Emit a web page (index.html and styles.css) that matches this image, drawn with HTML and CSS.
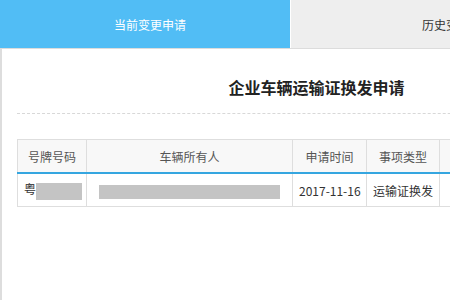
FILE: index.html
```html
<!DOCTYPE html>
<html lang="zh-CN">
<head>
    <meta charset="UTF-8">
    <title>变更申请</title>
    <link rel="stylesheet" href="styles.css">
</head>
<body>
<div class="page">
    <nav class="tabs">
        <a class="tab active" href="#">当前变更申请</a>
        <a class="tab" href="#">历史变更申请</a>
    </nav>

    <section class="panel">
        <h1 class="title">企业车辆运输证换发申请</h1>

        <table class="apply-table">
            <thead>
                <tr>
                    <th class="col-plate">号牌号码</th>
                    <th class="col-owner">车辆所有人</th>
                    <th class="col-date">申请时间</th>
                    <th class="col-type">事项类型</th>
                    <th class="col-state">审核状态</th>
                </tr>
            </thead>
            <tbody>
                <tr>
                    <td class="plate">粤<span class="mask mask-plate"></span></td>
                    <td><span class="mask mask-owner"></span></td>
                    <td class="center">2017-11-16</td>
                    <td class="center">运输证换发</td>
                    <td class="center">新申请</td>
                </tr>
            </tbody>
        </table>
    </section>
</div>
</body>
</html>
```

FILE: styles.css
```css
body {
    margin: 0;
    background: #fff;
    font-family: "Noto Sans CJK SC", "Liberation Sans", sans-serif;
    color: #333;
    overflow: hidden;
}
.page {
    width: 632px;
}
.tabs {
    display: flex;
    height: 48px;
    border-bottom: 1px solid #dcdcdc;
}
.tab {
    display: flex;
    align-items: center;
    justify-content: center;
    flex: 0 0 334px;
    background: #eeeeee;
    color: #333;
    font-size: 12px;
    text-decoration: none;
}
.tab.active {
    flex: 0 0 290px;
    box-sizing: border-box;
    padding-left: 10px; /* text sits a bit right of centre */
    margin-right: 1px;
    background: #51bdf5;
    color: #fff;
}
.panel {
    border-left: 2px solid #dddddd;
    padding: 0 16px 100px 15px;
    min-height: 251px;
    box-sizing: border-box;
}
.title {
    margin: 0;
    padding: 26px 0 14px;
    line-height: 24px;
    font-size: 16px;
    font-weight: bold;
    color: #222;
    text-align: center;
    border-bottom: 1px dashed #d8d8d8;
}
.apply-table {
    margin-top: 25px;
    width: 100%;
    table-layout: fixed;
    border-collapse: collapse;
    font-size: 12px;
}
.apply-table th, .apply-table td {
    border: 1px solid #dedede;
    height: 32px;
    padding: 0 6px;
    white-space: nowrap;
    overflow: hidden;
}
.apply-table th {
    background: #f8f8f8;
    color: #555;
    font-weight: normal;
    border-bottom: 2px solid #35a6e0;
}
.col-plate { width: 56px; }
.col-owner { width: 193px; }
.col-date { width: 61px; }
.col-type { width: 60px; }
.center {
    text-align: center;
}
.mask {
    display: inline-block;
    vertical-align: middle;
    background: #c4c4c4;
}
.mask-plate {
    width: 46px;
    height: 17px;
}
.mask-owner {
    width: 181px;
    height: 14px;
    margin-left: 6px;
}
```
